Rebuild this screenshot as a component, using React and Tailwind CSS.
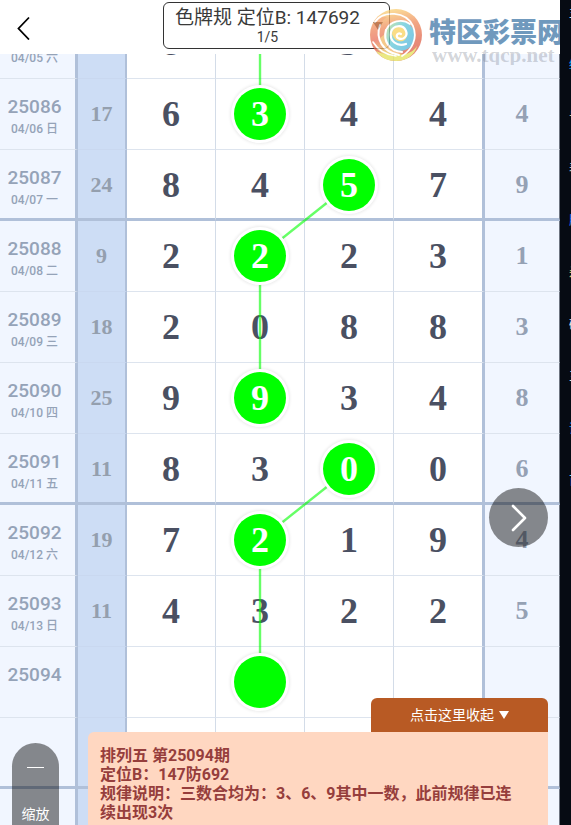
import clsx from 'clsx'

const SANS = "font-[Roboto,'Noto_Sans_CJK_SC',sans-serif]"

// from: [columns, rows] offset of the cell that the link line comes from
const ROWS = [
  { issue: '25085', date: '04/05 六', sum: '', digits: ['8', '', '3', ''], tail: '' },
  { issue: '25086', date: '04/06 日', sum: '17', digits: ['6', '3', '4', '4'], tail: '4', hit: 1, from: [0, -2] },
  { issue: '25087', date: '04/07 一', sum: '24', digits: ['8', '4', '5', '7'], tail: '9', hit: 2, thick: true },
  { issue: '25088', date: '04/08 二', sum: '9', digits: ['2', '2', '2', '3'], tail: '1', hit: 1, from: [1, -1] },
  { issue: '25089', date: '04/09 三', sum: '18', digits: ['2', '0', '8', '8'], tail: '3' },
  { issue: '25090', date: '04/10 四', sum: '25', digits: ['9', '9', '3', '4'], tail: '8', hit: 1, from: [0, -2] },
  { issue: '25091', date: '04/11 五', sum: '11', digits: ['8', '3', '0', '0'], tail: '6', hit: 2, thick: true },
  { issue: '25092', date: '04/12 六', sum: '19', digits: ['7', '2', '1', '9'], tail: '4', hit: 1, from: [1, -1] },
  { issue: '25093', date: '04/13 日', sum: '11', digits: ['4', '3', '2', '2'], tail: '5' },
  { issue: '25094', date: '', sum: '', digits: ['', '', '', ''], tail: '', hit: 1, from: [0, -2] },
  { issue: '', date: '', sum: '', digits: ['', '', '', ''], tail: '', thick: true },
  { issue: '', date: '', sum: '', digits: ['', '', '', ''], tail: '' }
]

const SIDE = [
  ['主', 'text-sky-200'],
  ['结', 'text-sky-500'],
  ['号', 'text-amber-100'],
  ['表', 'text-slate-200'],
  ['胆', 'text-blue-500'],
  ['杀', 'text-amber-200'],
  ['码', 'text-slate-200'],
  ['三', 'text-slate-200'],
  ['证', 'text-sky-500'],
  ['百', 'text-sky-300']
]

const Link = ({ from: [dx, dy] }) => (
  <svg className="pointer-events-none absolute inset-0 z-10 h-full w-full overflow-visible" aria-hidden="true">
    <line
      x1="50%"
      y1="50%"
      x2={`${50 + dx * 100}%`}
      y2={`${50 + dy * 100}%`}
      stroke="#00ff00"
      strokeOpacity="0.6"
      strokeWidth="2.4"
    />
  </svg>
)

const DigitCell = ({ value, hit, from, last, thick }) => (
  <td
    className={clsx(
      'relative px-0 pb-0 text-center align-middle text-4xl leading-9 font-bold text-[#4a5062]',
      last ? 'border-r-3 border-r-[#b0c0d9]' : 'border-r border-r-[#d3dce8]',
      thick ? 'border-b-3 border-b-[#b0c0d9] pt-[2px]' : 'border-b border-b-[#dde4ee] pt-0'
    )}
  >
    {hit && from && <Link from={from} />}
    {hit ? (
      <span className="relative z-20 mx-auto flex size-[52px] items-center justify-center rounded-full bg-[#00ff00] text-white shadow-[0_0_0_3px_#fff,0_0_3px_4px_rgba(0,0,0,0.08)]">
        {value}
      </span>
    ) : (
      value
    )}
  </td>
)

const Row = ({ row }) => {
  const line = row.thick ? 'border-b-3 border-b-[#b0c0d9]' : 'border-b border-b-[#dde4ee]'
  const pad = row.thick ? 'px-0 pt-[2px] pb-0' : 'p-0'
  return (
    <tr className="h-[71px]">
      <th
        scope="row"
        className={clsx('border-r-3 border-r-[#b0c0d9] bg-[#f1f6ff] p-0 pt-[14px] pr-[6px] align-top text-[#95a3b8]', SANS, line)}
      >
        <div className="text-[19px] leading-7 font-medium">{row.issue}</div>
        <div className="text-xs leading-4 font-medium">{row.date}</div>
      </th>
      <td
        className={clsx(
          'border-r-2 border-r-[#b0c0d9] bg-[#cdddf5] text-center text-[22px] leading-6 font-bold text-[#949fae]',
          pad,
          row.thick ? 'border-b-3 border-b-[#b0c0d9]' : 'border-b border-b-[#c9d8f0]'
        )}
      >
        {row.sum}
      </td>
      {row.digits.map((value, i) => (
        <DigitCell key={i} value={value} hit={row.hit === i} from={row.from} last={i === 3} thick={row.thick} />
      ))}
      <td
        className={clsx(
          'border-r border-r-[#6d7480] bg-[#f1f6ff] text-center text-[26px] leading-7 font-bold text-[#95a1b4]',
          pad,
          line
        )}
      >
        {row.tail}
      </td>
    </tr>
  )
}

const Swirl = () => (
  <svg viewBox="0 0 52 52" className="size-[52px] shrink-0 opacity-75" aria-hidden="true">
    <defs>
      <linearGradient id="rim" x1="0.3" y1="0" x2="0.5" y2="1">
        <stop offset="0" stopColor="#fbd977" />
        <stop offset="0.35" stopColor="#ee8a5c" />
        <stop offset="0.7" stopColor="#e0644c" />
        <stop offset="1" stopColor="#dc5a48" />
      </linearGradient>
      <linearGradient id="band" x1="0.4" y1="0" x2="0.5" y2="1">
        <stop offset="0" stopColor="#f4a060" />
        <stop offset="0.55" stopColor="#e9705a" />
        <stop offset="1" stopColor="#e6e45a" />
      </linearGradient>
      <linearGradient id="pool" x1="0" y1="0.2" x2="1" y2="0.8">
        <stop offset="0" stopColor="#b8dc8c" />
        <stop offset="0.4" stopColor="#62c8d8" />
        <stop offset="1" stopColor="#4fb2dc" />
      </linearGradient>
    </defs>
    <circle cx="26" cy="26" r="26" fill="url(#rim)" />
    <path d="M8 8C0 16-2 30 7 40c8 9 20 11 29 6-15-1-25-9-27-21C8 18 11 12 17 8Z" fill="url(#band)" />
    <path d="M6 42c8 4 18 6 30 3 6-2 9-5 11-8-2 9-11 15-21 15-8 0-15-3-20-10Z" fill="#e3e25a" />
    <circle cx="30" cy="27" r="15" fill="url(#pool)" />
    <path d="M16 24c-3 10 3 19 17 20-12 4-23-3-23-15Z" fill="#f2b765" />
    <path d="M22 25c0-6 7-10 12-6 5 3 4 11-1 13-5 1-9-1-11-7Z" fill="#f9d25e" />
    <g fill="none" stroke="#fff" strokeLinecap="round">
      <path d="M31 25c-3-2-6 2-3 4 5 3 10-2 8-7-3-7-13-6-15 1-2 9 6 15 15 12" strokeWidth="2.2" />
      <path d="M5 13C13 1 36 2 43 17c5 12-1 24-11 30" strokeWidth="1.8" />
      <path d="M16 21c4-9 16-12 24-6" strokeWidth="1.8" />
      <path d="M16 21c-3 11 3 21 16 22" strokeWidth="2.2" />
      <path d="M10 16c-5 14 3 27 19 30" strokeWidth="2" />
      <path d="M3 33c5 8 13 13 23 14" strokeWidth="1.6" />
    </g>
  </svg>
)

const Watermark = () => (
  <div className="pointer-events-none absolute top-[9px] right-0 z-30 flex w-[190px] overflow-hidden">
    <Swirl />
    <div className="ml-[7px] shrink-0 whitespace-nowrap">
      <div className="mt-2 font-['Noto_Sans_CJK_SC',sans-serif] text-[27px] leading-7 font-black text-[#7099bd]">
        特区彩票网
      </div>
      <div className="pl-[3px] font-['Liberation_Serif',serif] text-[21px] leading-5 font-bold text-gray-500/30">
        www.tqcp.net
      </div>
    </div>
  </div>
)

const Header = () => (
  <header className={clsx('relative z-30 flex h-[54px] shrink-0 items-start bg-white', SANS)}>
    <button type="button" aria-label="返回" className="mt-4 ml-4 flex h-6 w-4 items-center justify-center">
      <svg viewBox="0 0 16 24" className="h-6 w-4" fill="none" stroke="#000" strokeWidth="1.8">
        <path d="M13 1.500 2.500 12.500 13 23.500" />
      </svg>
    </button>
    <button
      type="button"
      className="mt-[2px] ml-[131px] flex h-[47px] w-[227px] items-center justify-between rounded-md border border-[#333] pr-[6px] pl-[11px] text-[#3a3a3a]"
    >
      <span className="text-center whitespace-nowrap">
        <span className="block text-[19px] leading-[22px]">色牌规 定位B: 147692</span>
        <span className="block text-sm leading-4">1/5</span>
      </span>
      <svg viewBox="0 0 10 8" className="h-2 w-[10px]" fill="#333">
        <path d="M0 0h10L5 8Z" />
      </svg>
    </button>
    <Watermark />
  </header>
)

const Notice = () => (
  <section className={clsx('absolute right-3 bottom-0 left-[88px] z-30 flex flex-col items-end', SANS)}>
    <button
      type="button"
      className="flex h-[34px] w-[177px] items-center justify-center gap-[5px] rounded-t-md bg-[#b85a24] text-sm text-white"
    >
      点击这里收起
      <svg viewBox="0 0 10 8" className="h-2 w-[10px]" fill="#fff">
        <path d="M0 0h10L5 8Z" />
      </svg>
    </button>
    <div className="w-full rounded-tl-md bg-[#ffd7c1] pt-[14px] pr-6 pb-[3px] pl-3 text-base leading-[19px] font-bold text-[#963e3c]">
      <p>排列五 第25094期</p>
      <p>定位B：147防692</p>
      <p>规律说明：三数合均为：3、6、9其中一数，此前规律已连续出现3次</p>
    </div>
  </section>
)

export default function App() {
  return (
    <div className="flex h-screen overflow-hidden bg-[#060b13] font-['Liberation_Serif','Noto_Sans_CJK_SC',serif]">
      <main className="relative flex min-w-0 flex-1 flex-col overflow-hidden bg-white">
        <Header />
        <div className="min-h-0 flex-1 overflow-hidden">
          <table className="-mt-[46px] w-full table-fixed border-separate border-spacing-0">
            <colgroup>
              <col className="w-[78px]" />
              <col className="w-[49px]" />
              <col className="w-[15.9%]" />
              <col className="w-[15.9%]" />
              <col className="w-[15.9%]" />
              <col />
              <col className="w-[75px]" />
            </colgroup>
            <tbody>
              {ROWS.map((row, i) => (
                <Row key={i} row={row} />
              ))}
            </tbody>
          </table>
        </div>
        <button
          type="button"
          aria-label="下一条"
          className="absolute right-3 bottom-[278px] z-30 flex size-[59px] items-center justify-center rounded-full bg-black/45"
        >
          <svg viewBox="0 0 16 28" className="h-7 w-4" fill="none" stroke="#fff" strokeWidth="2.6" strokeLinecap="round" strokeLinejoin="round">
            <path d="M2 2l12 12L2 26" />
          </svg>
        </button>
        <button
          type="button"
          className={clsx(
            'absolute bottom-0 left-3 z-30 flex h-[82px] w-[47px] flex-col items-center justify-between rounded-t-full bg-black/45 pt-6 text-sm leading-[22px] text-white',
            SANS
          )}
        >
          <span className="h-px w-[17px] bg-white" />
          缩放
        </button>
        <Notice />
      </main>
      <aside className="flex w-[11px] shrink-0 flex-col gap-8 overflow-hidden pt-[2px] pl-[9px] font-['Noto_Sans_CJK_SC',sans-serif] text-xs leading-5">
        {SIDE.map(([text, color]) => (
          <span key={text} className={clsx('whitespace-nowrap', color)}>
            {text}
          </span>
        ))}
      </aside>
    </div>
  )
}
